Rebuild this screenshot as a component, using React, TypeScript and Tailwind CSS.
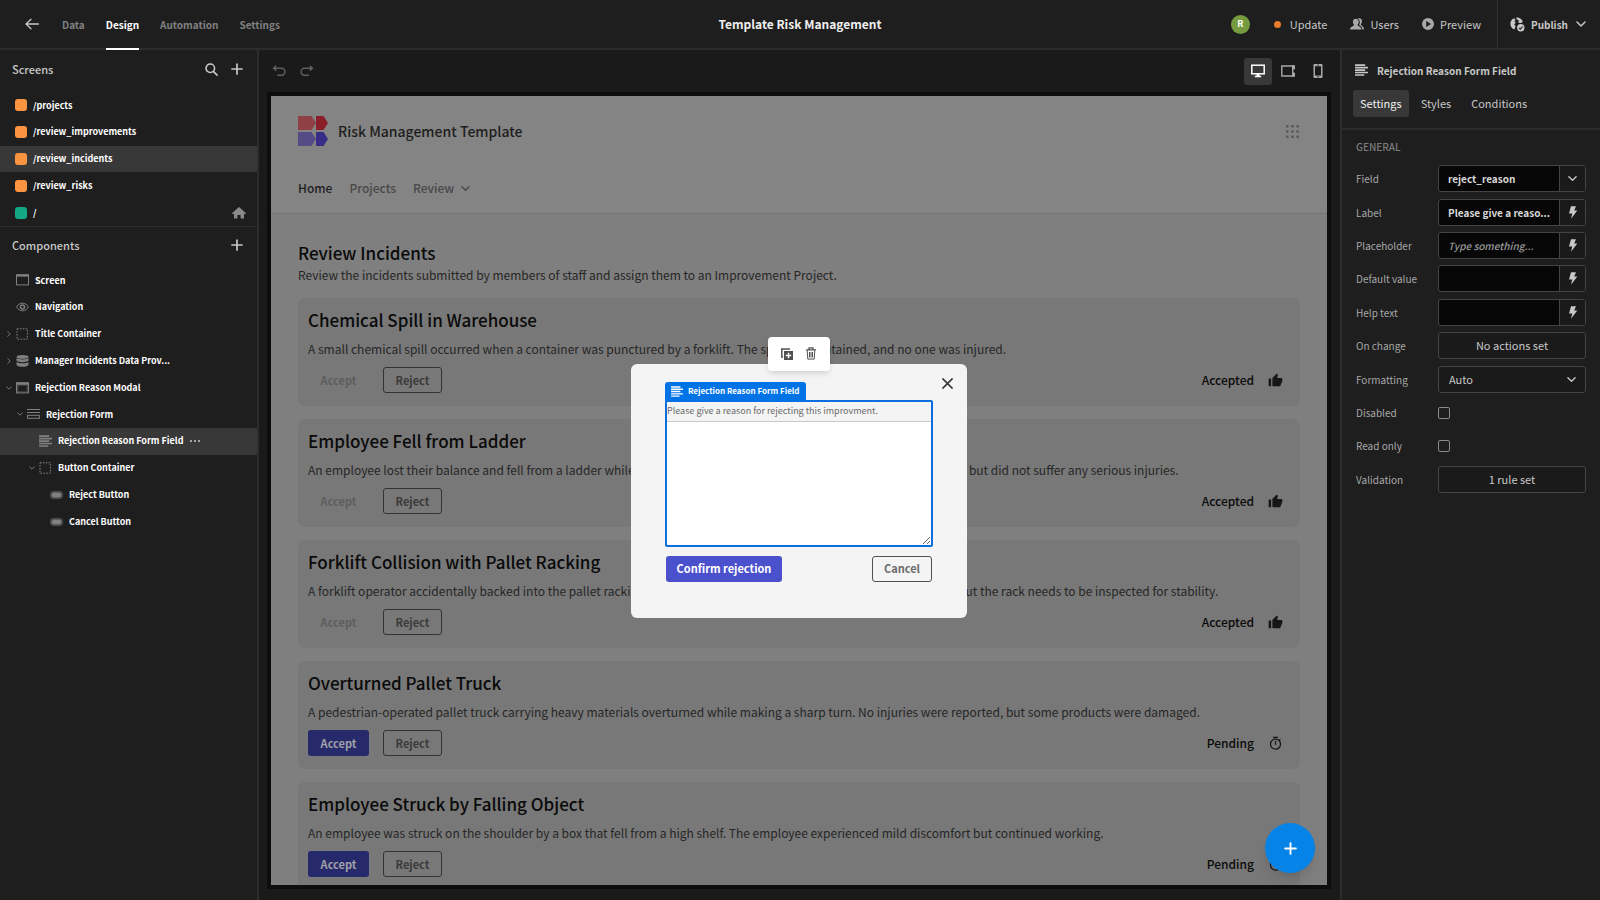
import React, { useState } from 'react';
import { RiThumbUpFill, RiTimerLine } from 'react-icons/ri';

interface IconProps {
  className?: string;
}

const ChevronDown: React.FC<IconProps> = ({ className = '' }) => (
  <svg viewBox="0 0 10 10" className={className} fill="none" stroke="currentColor" strokeWidth="1.5" strokeLinecap="round" strokeLinejoin="round">
    <path d="M1 3l4 4 4-4" />
  </svg>
);

const PlusIcon: React.FC<IconProps> = ({ className = '' }) => (
  <svg viewBox="0 0 12 12" className={className} fill="none" stroke="currentColor" strokeWidth="1.7" strokeLinecap="round">
    <path d="M6 1v10M1 6h10" />
  </svg>
);

const SearchIcon: React.FC<IconProps> = ({ className = '' }) => (
  <svg viewBox="0 0 14 14" className={className} fill="none" stroke="currentColor" strokeWidth="1.7" strokeLinecap="round">
    <circle cx="5.7" cy="5.7" r="4.6" />
    <path d="M9 9l4 4" />
  </svg>
);

const ArrowLeft: React.FC<IconProps> = ({ className = '' }) => (
  <svg viewBox="0 0 14 14" className={className} fill="none" stroke="currentColor" strokeWidth="1.3" strokeLinecap="round" strokeLinejoin="round">
    <path d="M13.4 7H1M6 2.2L1 7 6 11.8" />
  </svg>
);

const UndoIcon: React.FC<IconProps> = ({ className = '' }) => (
  <svg viewBox="0 0 14 12" className={className}>
    <path d="M4.2 0v6.4L0.4 3.2z" fill="currentColor" />
    <path d="M3.5 3.2h6a3.5 3.5 0 0 1 0 7H5.6" fill="none" stroke="currentColor" strokeWidth="1.4" strokeLinecap="round" />
  </svg>
);

const HomeIcon: React.FC<IconProps> = ({ className = '' }) => (
  <svg viewBox="0 0 14 12" className={className} fill="currentColor">
    <path d="M7 0l7 6.3-.5.7H12v4.6H8.6V8H5.4v3.6H2V7H.5L0 6.3z" />
  </svg>
);

const LinesIcon: React.FC<IconProps> = ({ className = '' }) => (
  <svg viewBox="0 0 14 13" className={className} stroke="currentColor" strokeWidth="1.7">
    <path d="M0 1.2h11M0 3.9h14M0 6.6h11M0 9.3h14M0 12h10" />
  </svg>
);

const ScreenIcon: React.FC<IconProps> = ({ className = '' }) => (
  <svg viewBox="0 0 13 12" className={className}>
    <rect x="0.5" y="0.9" width="12" height="10" fill="none" stroke="currentColor" />
    <path d="M0 .4h13v2.2H0z" fill="currentColor" />
  </svg>
);

const EyeIcon: React.FC<IconProps> = ({ className = '' }) => (
  <svg viewBox="0 0 13 12" className={className} fill="none" stroke="currentColor">
    <path d="M.6 6C2 3.4 4 2.2 6.5 2.2S11 3.4 12.4 6C11 8.6 9 9.8 6.5 9.8S2 8.6.6 6z" />
    <circle cx="6.5" cy="6" r="2" strokeWidth="1.5" />
  </svg>
);

const DashedIcon: React.FC<IconProps> = ({ className = '' }) => (
  <svg viewBox="0 0 13 12" className={className} fill="none" stroke="currentColor">
    <rect x="1" y="0.8" width="10.4" height="10.4" strokeDasharray="1.6 1.3" />
  </svg>
);

const DataIcon: React.FC<IconProps> = ({ className = '' }) => (
  <svg viewBox="0 0 13 12" className={className} fill="currentColor">
    <ellipse cx="6.5" cy="1.9" rx="6" ry="1.9" />
    <path d="M.5 3.1c1.8 1.7 10.2 1.7 12 0v2.6c-1.8 1.9-10.2 1.9-12 0z" />
    <path d="M.5 6.9c1.8 1.7 10.2 1.7 12 0v3c-1.8 2.6-10.2 2.6-12 0z" />
  </svg>
);

const ModalIcon: React.FC<IconProps> = ({ className = '' }) => (
  <svg viewBox="0 0 13 12" className={className}>
    <rect x="0.5" y="0.9" width="12" height="10" fill="none" stroke="currentColor" />
    <path d="M0 .4h13v2.4H0z" fill="currentColor" />
    <rect x="1" y="2.8" width="11" height="7.6" fill="currentColor" fillOpacity="0.4" />
    <rect x="2.8" y="4" width="7.4" height="5" fill="#1e1e1e" stroke="#1e1e1e" strokeDasharray="1 .8" strokeWidth="1.2" />
  </svg>
);

const FormIcon: React.FC<IconProps> = ({ className = '' }) => (
  <svg viewBox="0 0 13 12" className={className} fill="none" stroke="currentColor">
    <path d="M0 1.5h13M0 4.5h13" strokeWidth="1.2" />
    <rect x="0.6" y="7.3" width="11.8" height="3" />
  </svg>
);

const PillIcon: React.FC<IconProps> = ({ className = '' }) => (
  <svg viewBox="0 0 13 12" className={className}>
    <rect x="0" y="2" width="13" height="8" rx="4" fill="currentColor" fillOpacity="0.5" />
    <rect x="1.8" y="3.7" width="9.4" height="4.6" rx="2.3" fill="currentColor" />
  </svg>
);

const BoltIcon: React.FC<IconProps> = ({ className = '' }) => (
  <svg viewBox="0 0 10 13" className={className} fill="currentColor">
    <path d="M3 .3h5L6.2 4.4H9.3L3 12.7l1.3-5.2H1z" />
  </svg>
);

const UsersIcon: React.FC<IconProps> = ({ className = '' }) => (
  <svg viewBox="0 0 14 12" className={className} fill="currentColor">
    <path d="M7.8.6C10.2-.4 12 .9 12 3.2c0 1.4-.7 2.3-1.2 3 0 1.4 2.9 1.7 3.2 5.2h-1.6c-.3-2.6-2-3.5-3.3-4.4C10.3 4.8 10 2 7.8.6z" />
    <path d="M5.8.7c1.8 0 2.9 1.3 2.9 3C8.7 5 8.1 6 7.5 6.7c0 1.6 3.6 1.4 3.9 4.7H0C.2 8.1 4.1 8.3 4.1 6.7 3.4 6 2.9 5 2.9 3.7c0-1.7 1.1-3 2.9-3z" />
  </svg>
);

const PlayIcon: React.FC<IconProps> = ({ className = '' }) => (
  <svg viewBox="0 0 12 12" className={className} fill="currentColor" fillRule="evenodd">
    <path d="M6 0a6 6 0 1 1 0 12A6 6 0 0 1 6 0zM4.2 3v6l4.8-3z" />
  </svg>
);

const GlobeIcon: React.FC<IconProps> = ({ className = '' }) => (
  <svg viewBox="0 0 15 15" className={className}>
    <path d="M.6 8C0 5 1.6 2 4 1.2L5.6 3 4.4 4.2l1.4 1.6-1.6 1.4 1.4 2L4.4 12.4C2.2 11.8.9 10 .6 8z" fill="currentColor" />
    <path d="M6 .6c3.2-.4 6 1.400 6.800 4.400L10.600 6.200 8.400 5.800 8.800 3.400 7 2.600z" fill="currentColor" />
    <circle cx="10.8" cy="10.8" r="4.5" fill="#1e1e1e" />
    <circle cx="10.8" cy="10.8" r="3.7" fill="currentColor" />
    <path d="M9 10.9l1.3 1.3 2.3-2.7" fill="none" stroke="#1e1e1e" strokeWidth="1.1" />
  </svg>
);

const DesktopIcon: React.FC<IconProps> = ({ className = '' }) => (
  <svg viewBox="0 0 14 14" className={className}>
    <rect x="0.8" y="1.2" width="12.4" height="8.6" fill="none" stroke="currentColor" strokeWidth="1.5" />
    <path d="M5.5 9.8h3v2h1.7v1.5H3.8v-1.5h1.7z" fill="currentColor" />
  </svg>
);

const TabletIcon: React.FC<IconProps> = ({ className = '' }) => (
  <svg viewBox="0 0 14 12" className={className}>
    <path d="M13.3 1H.8v10h12.5" fill="none" stroke="currentColor" strokeWidth="1.4" />
    <path d="M11 .3h2.5c.3 0 .5.2.5.5V4l-.9.5H12.4v3h.7L14 8v3.2c0 .3-.2.5-.5.5H11z" fill="currentColor" />
  </svg>
);

const PhoneIcon: React.FC<IconProps> = ({ className = '' }) => (
  <svg viewBox="0 0 10 14" className={className}>
    <path fillRule="evenodd" d="M1.5 0h7c.6 0 1 .4 1 1v12c0 .6-.4 1-1 1h-7c-.6 0-1-.4-1-1V1c0-.6.4-1 1-1zM2 2.3v9.2h6V2.3zM4.2 12.2v1h1.6v-1zM4 .8v.7h2V.8z" fill="currentColor" />
  </svg>
);

const DuplicateIcon: React.FC<IconProps> = ({ className = '' }) => (
  <svg viewBox="0 0 12 12" className={className}>
    <path d="M9 1H.8v8H2" fill="none" stroke="currentColor" strokeWidth="1.5" />
    <path fillRule="evenodd" d="M3 3h9v9H3zM6.8 4.8v2H4.8v1.4h2v2h1.4v-2h2V6.8h-2v-2z" fill="currentColor" />
  </svg>
);

const TrashIcon: React.FC<IconProps> = ({ className = '' }) => (
  <svg viewBox="0 0 12 13" className={className} fill="none" stroke="currentColor">
    <path d="M4 2.4V.9h4v1.5M1 2.9h10" strokeWidth="1.2" />
    <path d="M2.2 3.4l.6 8.7h6.4l.6-8.7M4.5 5v5.5M6 5v5.5M7.5 5v5.5" />
  </svg>
);

const Logo: React.FC<IconProps> = ({ className = '' }) => (
  <svg viewBox="0 0 30 30" className={className}>
    <path d="M0 0h13.5L18 7l-4.5 7H0z" fill="#8f4045" />
    <path d="M18 0h7.5L30 7l-4.5 7H18z" fill="#8a1f29" />
    <path d="M0 16h13.5L18 23l-4.5 7H0z" fill="#554c86" />
    <path d="M18 16h7.5L30 23l-4.5 7H18z" fill="#382c87" />
  </svg>
);

const screens = [
  { path: '/projects', home: false },
  { path: '/review_improvements', home: false },
  { path: '/review_incidents', home: false },
  { path: '/review_risks', home: false },
  { path: '/', home: true },
];

const indents = ['pl-[4px]', 'pl-[15px]', 'pl-[27px]', 'pl-[38px]'];

const components = [
  { name: 'Screen', level: 0, icon: ScreenIcon, arrow: '' },
  { name: 'Navigation', level: 0, icon: EyeIcon, arrow: '' },
  { name: 'Title Container', level: 0, icon: DashedIcon, arrow: 'right' },
  { name: 'Manager Incidents Data Prov...', level: 0, icon: DataIcon, arrow: 'right' },
  { name: 'Rejection Reason Modal', level: 0, icon: ModalIcon, arrow: 'down' },
  { name: 'Rejection Form', level: 1, icon: FormIcon, arrow: 'down' },
  { name: 'Rejection Reason Form Field', level: 2, icon: LinesIcon, arrow: '' },
  { name: 'Button Container', level: 2, icon: DashedIcon, arrow: 'down' },
  { name: 'Reject Button', level: 3, icon: PillIcon, arrow: '' },
  { name: 'Cancel Button', level: 3, icon: PillIcon, arrow: '' },
];

const incidents = [
  {
    title: 'Chemical Spill in Warehouse',
    text: 'A small chemical spill occurred when a container was punctured by a forklift. The spill was contained, and no one was injured.',
    accepted: true,
  },
  {
    title: 'Employee Fell from Ladder',
    text: 'An employee lost their balance and fell from a ladder while restocking the highest shelves. They suffered minor bruises but did not suffer any serious injuries.',
    accepted: true,
  },
  {
    title: 'Forklift Collision with Pallet Racking',
    text: 'A forklift operator accidentally backed into the pallet racking. There were no injuries and no damage to the products, but the rack needs to be inspected for stability.',
    accepted: true,
  },
  {
    title: 'Overturned Pallet Truck',
    text: 'A pedestrian-operated pallet truck carrying heavy materials overturned while making a sharp turn. No injuries were reported, but some products were damaged.',
    accepted: false,
  },
  {
    title: 'Employee Struck by Falling Object',
    text: 'An employee was struck on the shoulder by a box that fell from a high shelf. The employee experienced mild discomfort but continued working.',
    accepted: false,
  },
];

const Header: React.FC = () => (
  <header className="h-[50px] shrink-0 grid grid-cols-[1fr_auto_1fr] border-b-2 border-[#2c2c2c] bg-[#1e1e1e] text-[11px]">
    <div className="flex items-center pl-[25px]">
      <button aria-label="Back" className="text-[#c8c8c8]">
        <ArrowLeft className="w-[14px] h-[14px]" />
      </button>
      <nav className="flex self-stretch gap-[21px] ml-[23px] text-[10px] font-bold text-[#808080]">
        <a href="#data" className="flex items-center">Data</a>
        <a href="#design" className="flex items-center -mb-[2px] border-b-2 border-white text-white">Design</a>
        <a href="#automation" className="flex items-center">Automation</a>
        <a href="#settings" className="flex items-center">Settings</a>
      </nav>
    </div>
    <h1 className="self-center text-[12px] font-bold text-[#efefef]">Template Risk Management</h1>
    <div className="flex items-center justify-end text-[#c8c8c8]">
      <div className="w-[19px] h-[19px] mr-[24px] rounded-full bg-[#769a3e] text-white text-[9px] font-bold flex items-center justify-center">R</div>
      <button className="flex items-center gap-[9px] mr-[23px]">
        <span className="w-[7px] h-[7px] rounded-full bg-[#e87b2c]"></span>
        Update
      </button>
      <button className="flex items-center gap-[6px] mr-[23px]">
        <UsersIcon className="w-[14px] h-[12px] text-[#a8a8a8]" />
        Users
      </button>
      <button className="flex items-center gap-[6px] mr-[16px]">
        <PlayIcon className="w-[12px] h-[12px] text-[#a8a8a8]" />
        Preview
      </button>
      <button className="self-stretch flex items-center pl-[12px] pr-[14px] border-l border-[#333333] text-[10px] font-bold">
        <GlobeIcon className="w-[15px] h-[15px] mr-[6px]" />
        Publish
        <ChevronDown className="w-[10px] h-[10px] ml-[8px]" />
      </button>
    </div>
  </header>
);

const LeftPanel: React.FC = () => (
  <aside className="w-[259px] shrink-0 flex flex-col border-r-2 border-[#2c2c2c] bg-[#1e1e1e]">
    <div className="h-[42px] flex items-center pl-[12px] pr-[14px] pb-[4px] text-[#c8c8c8]">
      <h2 className="text-[11px] font-medium mr-auto">Screens</h2>
      <button aria-label="Search screens" className="mr-[13px]">
        <SearchIcon className="w-[13px] h-[13px]" />
      </button>
      <button aria-label="Add screen">
        <PlusIcon className="w-[12px] h-[12px]" />
      </button>
    </div>
    <ul className="h-[134px] flex flex-col">
      {screens.map((s) => (
        <li key={s.path} className={`flex-1 flex items-center pl-[15px] pr-[11px] ${s.path === '/review_incidents' ? 'bg-[#383838]' : ''}`}>
          <span className={`w-[12px] h-[12px] mr-[6px] rounded-[3px] ${s.home ? 'bg-[#12a883]' : 'bg-[#fb9440]'}`}></span>
          <a href={`#${s.path}`} className="mr-auto text-[9px] font-bold text-white">{s.path}</a>
          {s.home && <HomeIcon className="w-[14px] h-[12px] text-[#8a8a8a]" />}
        </li>
      ))}
    </ul>
    <div className="h-[41px] flex items-center pl-[12px] pr-[14px] pb-[4px] border-t border-[#2c2c2c] text-[#c8c8c8]">
      <h2 className="text-[11px] font-medium mr-auto">Components</h2>
      <button aria-label="Add component">
        <PlusIcon className="w-[12px] h-[12px]" />
      </button>
    </div>
    <ul className="h-[268px] flex flex-col">
      {components.map(({ name, level, icon: Icon, arrow }) => (
        <li key={name} className={`flex-1 flex items-center ${indents[level]} ${level === 2 && !arrow ? 'bg-[#383838]' : ''}`}>
          <span className="w-[12px] flex items-center pl-[2px] text-[#808080]">
            {arrow && <ChevronDown className={`w-[6px] h-[6px] ${arrow === 'right' ? '-rotate-90' : ''}`} />}
          </span>
          <Icon className="w-[13px] h-[12px] mr-[6px] text-[#808080]" />
          <span className="text-[9px] font-bold text-white">{name}</span>
          {level === 2 && !arrow && (
            <button aria-label="More options" className="flex gap-[2px] ml-[7px]">
              <i className="w-[2px] h-[2px] rounded-full bg-[#c8c8c8]"></i>
              <i className="w-[2px] h-[2px] rounded-full bg-[#c8c8c8]"></i>
              <i className="w-[2px] h-[2px] rounded-full bg-[#c8c8c8]"></i>
            </button>
          )}
        </li>
      ))}
    </ul>
  </aside>
);

const IncidentCard: React.FC<{ title: string; text: string; accepted: boolean }> = ({ title, text, accepted }) => (
  <article className="h-[108px] shrink-0 px-[10px] pt-[10px] rounded-[7px] bg-[#787878]">
    <h3 className="text-[17px] leading-[24px] font-medium text-[#0a0a0a]">{title}</h3>
    <p className="mt-[7px] text-[12px] leading-[20px] text-[#262626] whitespace-nowrap">{text}</p>
    <div className="flex items-center mt-[8px] text-[11px] font-bold">
      <button
        disabled={accepted}
        className={`w-[61px] h-[26px] mr-[14px] rounded-[3px] ${accepted ? 'text-[#5e5e5e]' : 'bg-[#262a6b] text-[#a0a0a8]'}`}
      >
        Accept
      </button>
      <button className="w-[59px] h-[26px] mr-auto rounded-[3px] border border-[#333333] text-[#3a3a3a]">Reject</button>
      <span className="mr-[14px] text-[12px] font-medium text-[#0a0a0a]">{accepted ? 'Accepted' : 'Pending'}</span>
      <span className="mr-[7px] text-[#161616]">
        {accepted ? <RiThumbUpFill className="w-[15px] h-[15px]" /> : <RiTimerLine className="w-[15px] h-[15px]" />}
      </span>
    </div>
  </article>
);

const RejectionModal: React.FC = () => {
  const [reason, setReason] = useState('');
  return (
    <div className="absolute inset-0 flex items-center justify-center">
      <div role="dialog" aria-label="Rejection Reason Modal" className="relative w-[336px] h-[254px] px-[34px] pt-[36px] rounded-[6px] bg-[#f4f4f4]">
        <button aria-label="Close" className="absolute top-[14px] right-[14px] text-[#323232]">
          <svg viewBox="0 0 10 10" className="w-[11px] h-[11px]" stroke="currentColor" strokeWidth="1.3" strokeLinecap="round">
            <path d="M.8.8l8.4 8.4M9.2.8L.8 9.2" />
          </svg>
        </button>
        <div className="absolute -top-[27px] left-[137px] w-[62px] h-[34px] flex items-center justify-center gap-[12px] rounded-[4px] bg-white text-[#505050] shadow-md">
          <button aria-label="Duplicate">
            <DuplicateIcon className="w-[12px] h-[12px]" />
          </button>
          <button aria-label="Delete">
            <TrashIcon className="w-[12px] h-[13px]" />
          </button>
        </div>
        <div className="absolute top-[18px] left-[34px] h-[19px] px-[6px] flex items-center gap-[5px] rounded-t-[3px] bg-[#0073e6] text-white text-[8px] font-bold">
          <LinesIcon className="w-[12px] h-[11px]" />
          Rejection Reason Form Field
        </div>
        <div className="h-[147px] flex flex-col rounded-[2px] rounded-tl-none border-2 border-[#0d6ee0]">
          <label htmlFor="reason" className="h-[19px] text-[9px] leading-[18px] text-[#6b6b6b]">
            Please give a reason for rejecting this improvment.
          </label>
          <textarea
            id="reason"
            value={reason}
            onChange={(e) => setReason(e.target.value)}
            className="flex-1 border-t border-[#c8c8c8] bg-white outline-none text-[11px] text-[#323232]"
          />
        </div>
        <div className="flex justify-between mt-[9px] px-px text-[11px] font-bold">
          <button className="w-[116px] h-[26px] rounded-[3px] bg-[#4b50cd] text-white">Confirm rejection</button>
          <button className="w-[60px] h-[26px] rounded-[3px] border border-[#505050] text-[#6b6b6b]">Cancel</button>
        </div>
      </div>
    </div>
  );
};

const Preview: React.FC = () => (
  <div className="relative flex-1 min-h-0 ml-[8px] mr-[9px] mb-[11px] border-4 border-[#0d0d0d] bg-[#7f7f7f] flex flex-col overflow-hidden">
    <div className="h-[118px] shrink-0 px-[27px] pt-[20px] border-b border-[#747474] bg-[#848484]">
      <div className="flex items-center">
        <Logo className="w-[30px] h-[30px] mr-[10px]" />
        <span className="text-[14px] leading-[22px] font-medium text-[#1e1e1e]">Risk Management Template</span>
        <svg viewBox="0 0 13 13" className="w-[13px] h-[13px] ml-auto mr-px" fill="#5a5a5a">
          <path d="M0 0h2.5v2.5H0zM5.2 0h2.5v2.5H5.2zM10.4 0h2.5v2.5h-2.5zM0 5.2h2.5v2.5H0zM5.2 5.2h2.5v2.5H5.2zM10.4 5.2h2.5v2.5h-2.5zM0 10.4h2.5v2.5H0zM5.2 10.4h2.5v2.5H5.2zM10.4 10.4h2.5v2.5h-2.5z" />
        </svg>
      </div>
      <nav className="flex items-center gap-[17px] mt-[32px] text-[12px] leading-[20px] font-medium text-[#484848]">
        <a href="#home" className="text-[#1e1e1e]">Home</a>
        <a href="#projects">Projects</a>
        <button className="flex items-center gap-[7px]">
          Review
          <ChevronDown className="w-[9px] h-[9px]" />
        </button>
      </nav>
    </div>
    <main className="flex-1 min-h-0 px-[27px] pt-[27px] flex flex-col overflow-hidden">
      <h2 className="text-[17px] leading-[24px] font-medium text-[#0a0a0a]">Review Incidents</h2>
      <p className="text-[12px] leading-[20px] text-[#262626]">
        Review the incidents submitted by members of staff and assign them to an Improvement Project.
      </p>
      <div className="flex flex-col gap-[13px] mt-[13px]">
        {incidents.map((item) => (
          <IncidentCard key={item.title} {...item} />
        ))}
      </div>
    </main>
    <RejectionModal />
  </div>
);

const Canvas: React.FC = () => (
  <section className="flex-1 min-w-0 flex flex-col bg-[#1a1a1a]">
    <div className="h-[42px] shrink-0 flex items-center pl-[13px] pr-[17px] text-[#a8a8a8]">
      <button aria-label="Undo" className="mr-[14px] text-[#5f5f5f]">
        <UndoIcon className="w-[14px] h-[12px]" />
      </button>
      <button aria-label="Redo" className="mr-auto text-[#5f5f5f]">
        <UndoIcon className="w-[14px] h-[12px] -scale-x-100" />
      </button>
      <button aria-label="Desktop" className="w-[28px] h-[27px] mr-[9px] rounded-[3px] bg-[#383838] text-white flex items-center justify-center">
        <DesktopIcon className="w-[14px] h-[14px]" />
      </button>
      <button aria-label="Tablet" className="mr-[18px]">
        <TabletIcon className="w-[14px] h-[12px]" />
      </button>
      <button aria-label="Mobile">
        <PhoneIcon className="w-[10px] h-[14px]" />
      </button>
    </div>
    <Preview />
  </section>
);

const FieldRow: React.FC<{ label: string; id: string; children: React.ReactNode }> = ({ label, id, children }) => (
  <div className="flex-1 flex items-center">
    <label htmlFor={id} className="w-[82px] text-[10px] text-[#a8a8a8]">{label}</label>
    {children}
  </div>
);

const BoundInput: React.FC<{ id: string; value?: string; placeholder?: string; picker?: boolean }> = ({ id, value = '', placeholder, picker }) => (
  <div className="flex-1 min-w-0 h-[27px] flex rounded-[3px] border border-[#444444] bg-[#070707] overflow-hidden">
    <input
      id={id}
      defaultValue={value}
      placeholder={placeholder}
      className="flex-1 min-w-0 pl-[9px] bg-transparent outline-none text-[10px] font-bold text-[#d8d8d8] placeholder:font-medium placeholder:italic placeholder:text-[#9a9a9a]"
    />
    <button aria-label={`Bind ${id}`} className="w-[26px] border-l border-[#444444] bg-[#1a1a1a] text-[#c8c8c8] flex items-center justify-center">
      {picker ? <ChevronDown className="w-[9px] h-[9px]" /> : <BoltIcon className="w-[10px] h-[13px]" />}
    </button>
  </div>
);

const RightPanel: React.FC = () => (
  <aside className="w-[260px] shrink-0 flex flex-col border-l-2 border-[#2c2c2c] bg-[#1e1e1e] text-[11px] text-[#c8c8c8]">
    <div className="h-[80px] border-b-2 border-[#2c2c2c] pt-[9px] pl-[11px]">
      <div className="h-[22px] flex items-center gap-[9px] pl-[2px]">
        <LinesIcon className="w-[13px] h-[12px]" />
        <h2 className="text-[10px] font-bold">Rejection Reason Form Field</h2>
      </div>
      <div className="flex gap-[4px] mt-[9px]">
        <button className="h-[27px] px-[7px] rounded-[3px] bg-[#383838] text-[#efefef]">Settings</button>
        <button className="h-[27px] px-[8px]">Styles</button>
        <button className="h-[27px] px-[8px]">Conditions</button>
      </div>
    </div>
    <h3 className="h-[32px] pl-[14px] flex items-center text-[10px] font-medium text-[#7c7c7c]">GENERAL</h3>
    <div className="h-[334px] pl-[14px] pr-[14px] flex flex-col">
      <FieldRow label="Field" id="field"><BoundInput id="field" value="reject_reason" picker /></FieldRow>
      <FieldRow label="Label" id="label"><BoundInput id="label" value="Please give a reaso..." /></FieldRow>
      <FieldRow label="Placeholder" id="placeholder"><BoundInput id="placeholder" placeholder="Type something..." /></FieldRow>
      <FieldRow label="Default value" id="default"><BoundInput id="default" /></FieldRow>
      <FieldRow label="Help text" id="help"><BoundInput id="help" /></FieldRow>
      <FieldRow label="On change" id="change">
        <button id="change" className="flex-1 h-[27px] rounded-[3px] border border-[#444444] bg-[#1a1a1a]">No actions set</button>
      </FieldRow>
      <FieldRow label="Formatting" id="formatting">
        <div className="relative flex-1">
          <select id="formatting" className="w-full h-[27px] pl-[10px] appearance-none rounded-[3px] border border-[#444444] bg-[#1a1a1a]">
            <option>Auto</option>
          </select>
          <ChevronDown className="absolute right-[10px] top-[9px] w-[9px] h-[9px] pointer-events-none" />
        </div>
      </FieldRow>
      <FieldRow label="Disabled" id="disabled">
        <input id="disabled" type="checkbox" className="w-[12px] h-[12px] appearance-none rounded-[2px] border border-[#8a8a8a] checked:bg-[#8a8a8a]" />
      </FieldRow>
      <FieldRow label="Read only" id="readonly">
        <input id="readonly" type="checkbox" className="w-[12px] h-[12px] appearance-none rounded-[2px] border border-[#8a8a8a] checked:bg-[#8a8a8a]" />
      </FieldRow>
      <FieldRow label="Validation" id="validation">
        <button id="validation" className="flex-1 h-[27px] rounded-[3px] border border-[#444444] bg-[#1a1a1a]">1 rule set</button>
      </FieldRow>
    </div>
  </aside>
);

const App: React.FC = () => {
  return (
    <div className="relative h-screen flex flex-col overflow-hidden bg-[#1a1a1a] font-['Source_Sans_Pro','Noto_Sans_CJK_SC',sans-serif]">
      <Header />
      <div className="flex-1 min-h-0 flex">
        <LeftPanel />
        <Canvas />
        <RightPanel />
      </div>
      <button aria-label="Add" className="absolute right-[285px] bottom-[27px] w-[50px] h-[50px] rounded-full bg-[#0683e6] text-white shadow-lg flex items-center justify-center">
        <PlusIcon className="w-[13px] h-[13px]" />
      </button>
    </div>
  );
};

export default App;
